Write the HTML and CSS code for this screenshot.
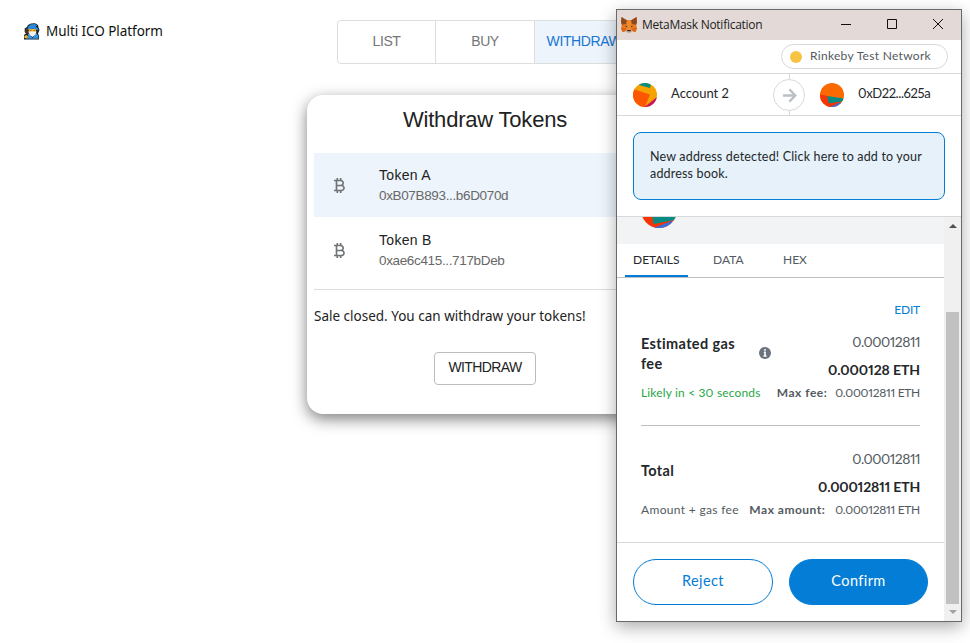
FILE: index.html
```html
<!DOCTYPE html>
<html lang="en">
<head>
<meta charset="utf-8">
<title>Multi ICO Platform</title>
<link rel="stylesheet" href="styles.css">
</head>
<body>
<div class="page">
  <header class="brand">
    <svg class="wizard" viewBox="0 0 17 17">
      <path d="M1 16V12L3 10.5 1.7 9V5.5L4 4 5 2 8 .5 12 .3 15 2 15.5 4.5 16.5 7 15 10.5 16 13V16.5H1Z" fill="#151c24"/>
      <path d="M2 8.7 2.6 5.5 5 5 5.5 10 4 12Z" fill="#4a3028"/>
      <path d="M4.5 5.8 5.5 2.9 8 1.2 12 1 14.5 2.5 12.5 3.2 15 5.5 15.5 7.5 10 5.8 5 6.8Z" fill="#2b88d8"/>
      <path d="M5.500 10 9.500 15 13 10 15.300 12.500V15.700H4Z" fill="#3292e0"/>
      <rect x="5.7" y="6" width="7.4" height="4" fill="#f0b52c"/>
      <path d="M5.500 8.500H13.500L12.500 11.500 9.500 14 6.700 12Z" fill="#f4f2ea"/>
      <path d="M6.500 7.300h2M10.500 7.300h2" stroke="#6a4a1a" stroke-width=".7"/>
      <path d="M1.300 13 3.500 12 5 13.500 4 15.500 1.500 15Z" fill="#f0b52c"/>
    </svg>
    <span class="brand-name">Multi ICO Platform</span>
  </header>
  <main class="content">
    <nav class="toggle">
      <button class="toggle-item">LIST</button>
      <button class="toggle-item">BUY</button>
      <button class="toggle-item active">WITHDRAW</button>
    </nav>
    <section class="card">
      <h1 class="card-title">Withdraw Tokens</h1>
      <ul class="tokens">
        <li class="token selected">
          <svg class="coin" viewBox="0 0 24 24"><path fill-rule="evenodd" d="M17.06 11.57C17.65 10.88 18 9.98 18 9C18 7.14 16.73 5.57 15 5.13V3H13V5H11V3H9V5H6V7H8V17H6V19H9V21H11V19H13V21H15V19C17.21 19 19 17.21 19 15C19 13.55 18.22 12.27 17.06 11.57ZM10 7H14C15.1 7 16 7.9 16 9S15.1 11 14 11H10ZM15 17H10V13H15C16.1 13 17 13.9 17 15S16.1 17 15 17Z"/></svg>
          <div class="token-text"><span class="token-name">Token A</span><span class="token-addr">0xB07B893...b6D070d</span></div>
        </li>
        <li class="token">
          <svg class="coin" viewBox="0 0 24 24"><path fill-rule="evenodd" d="M17.06 11.57C17.65 10.88 18 9.98 18 9C18 7.14 16.73 5.57 15 5.13V3H13V5H11V3H9V5H6V7H8V17H6V19H9V21H11V19H13V21H15V19C17.21 19 19 17.21 19 15C19 13.55 18.22 12.27 17.06 11.57ZM10 7H14C15.1 7 16 7.9 16 9S15.1 11 14 11H10ZM15 17H10V13H15C16.1 13 17 13.9 17 15S16.1 17 15 17Z"/></svg>
          <div class="token-text"><span class="token-name">Token B</span><span class="token-addr">0xae6c415...717bDeb</span></div>
        </li>
      </ul>
      <p class="sale">Sale closed. You can withdraw your tokens!</p>
      <button class="withdraw">WITHDRAW</button>
    </section>
  </main>
</div>

<aside class="window">
  <div class="titlebar">
    <svg class="fox" viewBox="0 0 16 16">
      <path d="M.5 0 6 3.2H10L15.500 0 16 5 15.200 8 16 11 14.500 15 11 14 9.300 15.800H6.700L5 14 1.500 15 0 11 .8 8 0 5Z" fill="#e8791f"/>
      <path d="M.5 0 6 3.500 5 7 .8 7.700 0 5ZM15.500 0 10 3.500 11 7 15.200 7.700 16 5Z" fill="#8c4a22"/>
      <path d="M6 3.200H10L9.500 13H6.500Z" fill="#f08a28"/>
      <path d="M0 11H4.500L5 14 1.500 15ZM16 11H11.500L11 14 14.500 15Z" fill="#d9681c"/>
      <path d="M4 8.800 6.200 9.200 5.500 10.200ZM12 8.800 9.800 9.200 10.500 10.200Z" fill="#243447"/>
      <path d="M5 13.500 6.500 12.700H9.500L11 13.500 9.300 15.700H6.700Z" fill="#c9b8a8"/>
      <path d="M6.500 13H9.500L9.800 14.300H6.200Z" fill="#1b1b1b"/>
    </svg>
    <span class="win-title">MetaMask Notification</span>
    <svg class="controls" viewBox="0 0 104 12" fill="none" stroke="#111" stroke-width="1">
      <path d="M0 6.500H10M46.500 1.500H55.500V10.500H46.500ZM92 1 102 11M102 1 92 11"/>
    </svg>
  </div>
  <div class="network-row"><div class="network"><i class="dot"></i><span>Rinkeby Test Network</span></div></div>
  <div class="accounts">
    <svg class="avatar" viewBox="0 0 24 24"><clipPath id="a"><circle cx="12" cy="12" r="12"/></clipPath><g clip-path="url(#a)"><path fill="#f5a300" d="M0 0h24v24H0z"/><path fill="#078c80" d="M5 0H18L17 5 6 2Z"/><path fill="#fc5600" d="M0 6 17 11.500 12 24H0Z"/><path fill="#c81465" d="M11.500 24 24 14V24Z"/></g></svg>
    <span class="from">Account 2</span>
    <div class="transfer"><svg viewBox="0 0 16 16" fill="none" stroke="#bbc0c5" stroke-width="2.500"><path d="M1 8H14M7.800 1.500 14.300 8 7.800 14.500"/></svg></div>
    <svg class="avatar" viewBox="0 0 24 24"><g clip-path="url(#a)"><path fill="#fa6a00" d="M0 0h24v24H0z"/><path fill="#f73404" d="M0 11.500 8 13 12 24H0Z"/><path fill="#078c85" d="M7 13 24 15.500V18L9 21Z"/><path fill="#f73404" d="M8.500 20.500 22 18.500 13 24H8Z"/><path fill="#3b6ddb" d="M10 24 21 19V24Z"/></g></svg>
    <span class="to">0xD22...625a</span>
  </div>
  <div class="notice-wrap"><div class="notice"><span>New address detected! Click here to add to your</span><span>address book.</span></div></div>
  <div class="scroller">
    <div class="pane">
      <div class="summary"><svg viewBox="0 0 36 11"><clipPath id="b"><circle cx="18" cy="-7" r="18"/></clipPath><g clip-path="url(#b)"><path fill="#f73404" d="M0 0H36V11H0Z"/><path fill="#078c85" d="M11.500 0H36L34 3 12.500 7Z"/><path fill="#3b6ddb" d="M12 11 31 4V11Z"/></g></svg></div>
      <div class="tabs"><span class="tab current">DETAILS</span><span class="tab">DATA</span><span class="tab">HEX</span></div>
      <div class="details">
        <div class="edit">EDIT</div>
        <div class="fee">
          <div class="fee-label"><span>Estimated gas</span><span>fee</span></div>
          <svg class="info" viewBox="0 0 12 12"><circle cx="6" cy="6" r="6" fill="#6a737d"/><path d="M6 2V3.700M4.800 5.200H6V9M4.500 9H7.500" stroke="#fff" stroke-width="1.600" fill="none"/></svg>
          <div class="amounts"><span class="light">0.00012811</span><span class="strong s1">0.000128 ETH</span></div>
        </div>
        <div class="note"><span class="likely">Likely in &lt; 30 seconds</span><span class="max">Max fee:</span><span class="val">0.00012811 ETH</span></div>
        <div class="fee total">
          <div class="fee-label"><span class="tot">Total</span></div>
          <div class="amounts"><span class="light">0.00012811</span><span class="strong s2">0.00012811 ETH</span></div>
        </div>
        <div class="note"><span class="agf">Amount + gas fee</span><span class="max m2">Max amount:</span><span class="val">0.00012811 ETH</span></div>
      </div>
      <footer class="actions"><button class="reject">Reject</button><button class="confirm">Confirm</button></footer>
    </div>
    <div class="scrollbar"><i class="up"></i><i class="thumb"></i><i class="down"></i></div>
  </div>
</aside>
</body>
</html>
```
FILE: styles.css
```css
* { box-sizing: border-box; }
body { margin: 0; background: #fff; width: 970px; height: 643px; overflow: hidden; position: relative; font-family: "Liberation Sans", sans-serif; }
button { font: inherit; margin: 0; padding: 0; }
span { white-space: nowrap; }
.page { display: grid; grid-template-columns: 307px 356px; }
.brand { display: flex; align-items: center; gap: 6px; height: 22px; margin-top: 20px; padding-left: 23px; }
.wizard { width: 17px; height: 17px; }
.brand-name { font: 13.5px "Noto Sans", sans-serif; color: #111; letter-spacing: -0.06px; }
.toggle { display: grid; grid-template-columns: 98px 99px 98px; width: 297px; height: 44px; margin: 20px 0 0 30px; border: 1px solid #dedede; border-radius: 4px; }
.toggle-item { border: 0; border-right: 1px solid #dedede; background: none; color: #757575; font-size: 14px; letter-spacing: -.4px; padding-bottom: 3px; }
.toggle-item.active { background: #edf4fc; color: #1976d2; border-right: 0; }
.card { width: 356px; height: 319px; margin-top: 31px; padding: 0 7px; border-radius: 16px; background: #fff; box-shadow: 0 5px 15px rgba(0,0,0,.5); display: flex; flex-direction: column; align-items: center; }
.card-title { margin: 0; height: 58px; padding-top: 10px; font-size: 22px; line-height: 30px; font-weight: 400; color: #222; letter-spacing: -.2px; }
.tokens { list-style: none; margin: 0; padding: 0; width: 342px; height: 137px; border-bottom: 1px solid #dcdcdc; }
.token { display: flex; align-items: center; height: 64px; padding-left: 15px; margin-bottom: 1px; }
.token.selected { background: #edf4fc; }
.coin { width: 20px; height: 21px; fill: #707376; margin: 0 30px 0 0; }
.token-text { display: flex; flex-direction: column; line-height: 20px; padding-top: 1px; }
.token-name { font-size: 14px; color: #222; letter-spacing: .3px; margin-top: -1px; }
.token-addr { font-size: 13.5px; color: #686868; letter-spacing: -.35px; margin-top: 1px; }
.sale { margin: 16px 0 0; align-self: flex-start; font: 13.5px/20px "Noto Sans", sans-serif; color: #222; white-space: nowrap; }
.withdraw { width: 102px; height: 33px; margin-top: 26px; border: 1px solid #bcbcbc; border-radius: 4px; background: #fff; font-size: 14px; letter-spacing: -.6px; color: #222; padding-bottom: 3px; }

.window { position: absolute; left: 616px; top: 9px; width: 346px; height: 613px; border: 1px solid #696969; background: #fff; box-shadow: 0 5px 16px rgba(0,0,0,.33); font-family: Lato, sans-serif; color: #24272a; font-variant-numeric: proportional-nums; }
.titlebar { height: 30px; background: #e3dad7; display: flex; align-items: center; padding-left: 4px; }
.fox { width: 16px; height: 16px; margin-right: 5px; }
.win-title { font: 12px "Open Sans", sans-serif; color: #222; width: 199px; letter-spacing: -.27px; margin-top: -1px; }
.controls { width: 104px; height: 12px; margin-top: -2px; }
.network-row { height: 34px; display: flex; justify-content: flex-end; padding: 4px 13px 0 0; border-bottom: 1px solid #d6d9dc; }
.network { width: 167px; height: 25px; border: 1px solid #d6d9dc; border-radius: 13px; display: flex; align-items: center; gap: 8px; padding-left: 8px; font-size: 12px; color: #535a61; letter-spacing: .3px; }
.network span { margin-top: -2px; }
.dot { width: 12px; height: 12px; border-radius: 50%; background: #f6c343; }
.accounts { height: 42px; border-bottom: 1px solid #d6d9dc; display: grid; grid-template-columns: 38px 102px 47px 38px auto; padding-left: 16px; align-items: center; font-size: 13px; background: linear-gradient(#d6d9dc,#d6d9dc) 172px 0 / 1px 41px no-repeat; }
.avatar { width: 24px; height: 24px; margin-top: 1px; }
.from, .to { margin-top: -3px; }
.to { letter-spacing: -.4px; }
.transfer { width: 32px; height: 32px; border: 1px solid #d6d9dc; border-radius: 50%; background: #fff; display: grid; place-items: center; margin-top: 1px; }
.transfer svg { width: 15px; height: 15px; }
.notice-wrap { height: 101px; padding: 16px; border-bottom: 1px solid #d6d9dc; }
.notice { height: 68px; width: 312px; border: 1px solid #037dd6; border-radius: 8px; background: #e6f1fa; padding: 15px 16px; display: flex; flex-direction: column; align-items: flex-start; font-size: 12.5px; letter-spacing: .17px; line-height: 17px; }
.scroller { display: grid; grid-template-columns: 327px 17px; height: 404px; }
.summary { background: #f2f3f4; height: 27px; padding-left: 24px; }
.summary svg { display: block; width: 36px; height: 11px; }
.tabs { height: 34px; border-bottom: 1px solid #bbc0c5; padding-left: 8px; display: flex; gap: 17px; font-size: 12px; color: #535a61; }
.tab { height: 33px; line-height: 32px; padding: 0 8px; width: 63px; }
.tab + .tab { width: 53px; }
.tab.current { border-bottom: 2px solid #037dd6; color: #24272a; }
.details { height: 264px; padding: 22px 24px 0; }
.edit { text-align: right; font-size: 12px; line-height: 20px; color: #037dd6; letter-spacing: -.2px; }
.fee { height: 63px; display: grid; grid-template-columns: 118px 12px 1fr; align-items: start; padding-top: 11px; }
.fee-label { display: flex; flex-direction: column; align-items: flex-start; font-weight: 700; font-size: 14.5px; letter-spacing: .35px; line-height: 20px; padding-top: 3px; }
.info { width: 12px; height: 12px; margin-top: 16px; }
.amounts { display: flex; flex-direction: column; align-items: flex-end; font-size: 14px; margin-top: -1px; }
.light { color: #535a61; line-height: 24px; letter-spacing: -.5px; }
.strong { font-weight: 700; line-height: 32px; }
.s1 { letter-spacing: -.1px; }
.s2 { letter-spacing: -.2px; }
.note { display: flex; justify-content: flex-end; font-size: 12px; line-height: 20px; color: #535a61; }
.note > :first-child { margin-right: auto; letter-spacing: .16px; }
.note > .agf:first-child { letter-spacing: .33px; }
.note > .likely { color: #28a745; }
.max { font-weight: 700; margin-right: 8px; letter-spacing: .5px; }
.m2 { margin-right: 10px; }
.val { letter-spacing: -.28px; }
.total { grid-template-columns: 118px 1fr; height: 75px; margin-top: 22px; border-top: 1px solid #bbc0c5; padding-top: 22px; }
.total .fee-label { padding-top: 13px; }
.actions { height: 79px; border-top: 1px solid #d6d9dc; padding: 16px 16px 0; display: grid; grid-template-columns: 140px 139px; gap: 16px; }
.actions button { height: 46px; border-radius: 23px; border: 1px solid #037dd6; font-size: 14.5px; letter-spacing: .4px; padding-bottom: 3px; }
.actions .reject { background: #fff; color: #037dd6; }
.actions .confirm { background: #037dd6; color: #fff; }
.scrollbar { background: #f0f0f0; display: flex; flex-direction: column; align-items: center; }
.up { border: 4px solid transparent; border-top: 0; border-bottom: 4px solid #505050; margin-top: 7px; }
.thumb { width: 13px; height: 292px; background: #c1c1c1; margin: 84px 2px 0; }
.down { border: 4px solid transparent; border-bottom: 0; border-top: 4px solid #a3a3a3; margin-top: 6px; }
```
